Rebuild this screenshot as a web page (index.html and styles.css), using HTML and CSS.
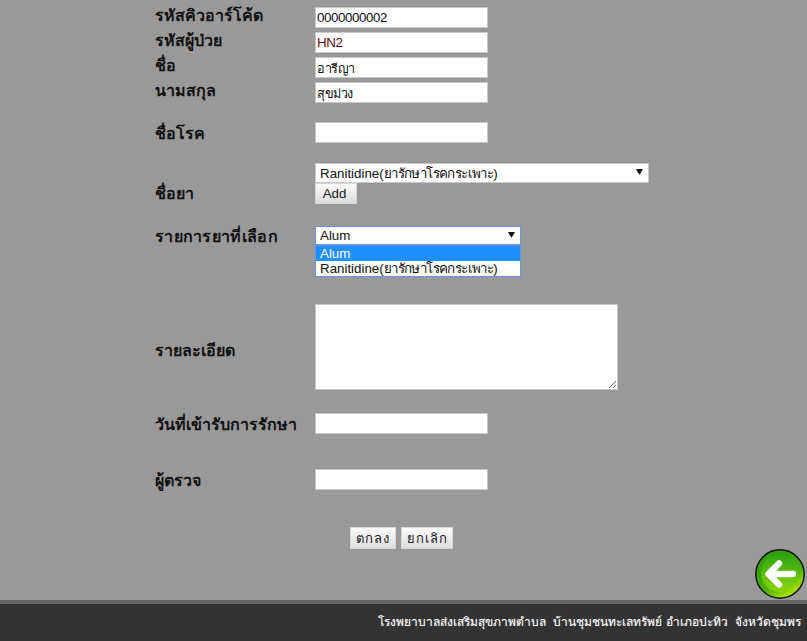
FILE: index.html
```html
<!DOCTYPE html>
<html lang="th">
<head>
<meta charset="utf-8">
<title>ข้อมูลการรักษา</title>
<link rel="stylesheet" href="styles.css">
</head>
<body>
<main class="page">
  <form class="form">
    <div class="row row-basic first"><label class="label">รหัสคิวอาร์โค้ด</label><input class="field" value="0000000002"></div>
    <div class="row row-basic"><label class="label">รหัสผู้ป่วย</label><input class="field field-red" value="HN2"></div>
    <div class="row row-basic"><label class="label">ชื่อ</label><input class="field field-thai" value="อารีญา"></div>
    <div class="row row-basic"><label class="label">นามสกุล</label><input class="field field-thai" value="สุขม่วง"></div>
    <div class="row row-disease"><label class="label">ชื่อโรค</label><input class="field"></div>
    <div class="row row-drug">
      <label class="label label-drug">ชื่อยา</label>
      <div class="stack">
        <div class="select select-wide"><span>Ranitidine(<span class="thai">ยารักษาโรคกระเพาะ</span>)</span><svg class="caret" viewBox="0 0 8 7"><path d="M0 0h8L4 7z"/></svg></div>
        <button type="button" class="btn btn-add">Add</button>
      </div>
    </div>
    <div class="row row-chosen">
      <label class="label label-wide">รายการยาที่เลือก</label>
      <div class="select select-open"><span>Alum</span><svg class="caret" viewBox="0 0 8 7"><path d="M0 0h8L4 7z"/></svg>
        <ul class="options">
          <li class="option option-on">Alum</li>
          <li class="option">Ranitidine(<span class="thai">ยารักษาโรคกระเพาะ</span>)</li>
        </ul>
      </div>
    </div>
    <div class="row row-detail"><label class="label label-detail">รายละเอียด</label><textarea class="area"></textarea></div>
    <div class="row row-date"><label class="label">วันที่เข้ารับการรักษา</label><input class="field"></div>
    <div class="row row-doctor"><label class="label">ผู้ตรวจ</label><input class="field"></div>
    <div class="actions">
      <button type="button" class="btn btn-thai btn-ok">ตกลง</button>
      <button type="button" class="btn btn-thai">ยกเลิก</button>
    </div>
  </form>
  <a class="back" href="#" aria-label="กลับ">
    <svg viewBox="0 0 50 50" width="50" height="50">
      <defs>
        <linearGradient id="rim" x1="0.2" y1="0" x2="0.8" y2="1"><stop offset="0" stop-color="#2c9a10"/><stop offset="0.6" stop-color="#45b00c"/><stop offset="1" stop-color="#c8f000"/></linearGradient>
        <linearGradient id="core" x1="0.5" y1="0" x2="0.5" y2="1"><stop offset="0" stop-color="#2aa312"/><stop offset="1" stop-color="#8fd60a"/></linearGradient>
      </defs>
      <circle cx="25" cy="25" r="24.2" fill="url(#rim)" stroke="#0b0f06" stroke-width="1.4"/>
      <circle cx="25" cy="24" r="19" fill="url(#core)"/>
      <path d="M38 25H15M24 14.5 13.5 25 24 35.5" fill="none" stroke="#fff" stroke-width="6.4" stroke-linecap="round" stroke-linejoin="round"/>
    </svg>
  </a>
</main>
<footer class="footer"><p class="footer-text">โรงพยาบาลส่งเสริมสุขภาพตำบล&nbsp; บ้านชุมชนทะเลทรัพย์ อำเภอปะทิว&nbsp; จังหวัดชุมพร</p></footer>
</body>
</html>
```
FILE: styles.css
```css
html, body { margin: 0; padding: 0; height: 100%; }
body {
  background: #999999;
  display: flex;
  flex-direction: column;
  height: 641px;
  overflow: hidden;
  font-family: "Liberation Sans", Arial, sans-serif;
  color: #111;
}
.page { flex: 1; position: relative; }
.form { padding: 7px 0 0 155px; }
.row { display: flex; align-items: center; }
.label {
  width: 160px;
  flex: none;
  box-sizing: border-box;
  padding-top: 2px;
  font-family: "Liberation Serif", "Noto Sans", serif;
  font-weight: bold;
  font-size: 16px;
  color: #111;
}
.label-wide { letter-spacing: 0.3px; white-space: nowrap; }
.row-basic { height: 21px; margin-bottom: 4px; }
.row-basic .label { padding-top: 0; padding-bottom: 4px; }
.row-disease { height: 21px; margin-top: 19px; }
.row-drug { margin-top: 20px; align-items: flex-start; }
.row-drug .label-drug { margin-top: 18px; padding-top: 0; }
.stack { display: flex; flex-direction: column; align-items: flex-start; }
.row-chosen { margin-top: 20px; height: 19px; }
.row-detail { margin-top: 59px; height: 86px; }
.row .label-detail { padding-top: 6px; }
.row-date { margin-top: 23px; height: 21px; }
.row-doctor { margin-top: 35px; height: 21px; }
.field, .area {
  box-sizing: border-box;
  border: 1px solid #c8c8c8;
  background: #fff;
  border-radius: 0;
  outline: none;
  margin: 0;
  font-family: "Liberation Sans", Arial, sans-serif;
  font-size: 13.33px;
  letter-spacing: -0.41px;
  color: #111;
  padding: 0 1px 1px 1px;
}
.field { width: 173px; height: 21px; }
.field-thai { font-size: 12.6px; padding: 2px 1px 0 1px; }
.field-red { color: #5e0b0b; }
.area { width: 303px; height: 86px; display: block; }
.select {
  box-sizing: border-box;
  position: relative;
  background: #fff;
  display: flex;
  align-items: center;
  padding-left: 4px;
  font-size: 13.33px;
  color: #111;
}
.thai { letter-spacing: -0.6px; }
.select-wide { width: 334px; height: 20px; border: 1px solid #c8c8c8; }
.select-open { width: 206px; height: 19px; border: 1px solid #6b93e0; }
.caret { position: absolute; top: 5px; width: 7px; height: 6px; fill: #111; }
.select-wide .caret { right: 5px; }
.select-open .caret { right: 5px; }
.options {
  position: absolute;
  left: -1px;
  top: 18px;
  width: 206px;
  box-sizing: border-box;
  margin: 0;
  padding: 0;
  list-style: none;
  background: #fff;
  border: 1px solid #6b93e0;
}
.option { height: 15px; line-height: 15px; padding-left: 4px; white-space: nowrap; }
.option-on { background: #1e90ff; color: #fff; }
.btn {
  box-sizing: border-box;
  border: 1px solid #d8d8d8;
  border-radius: 0;
  background: linear-gradient(#fbfbfb, #dedede);
  margin: 0;
  padding: 0;
  color: #222;
  font-family: "Liberation Sans", Arial, sans-serif;
}
.btn-add { width: 42px; height: 21px; font-size: 13.33px; padding-right: 3px; }
.actions { display: flex; gap: 5px; margin: 37px 0 0 195px; }
.btn-thai { height: 22px; width: 52px; font-size: 13px; letter-spacing: 1px; }
.btn-ok { width: 46px; }
.back { position: absolute; right: 2px; top: 549px; width: 50px; height: 50px; display: block; }
.back svg { display: block; }
.footer {
  flex: none;
  height: 37px;
  border-top: 4px solid #666666;
  background: #333333;
  display: flex;
  justify-content: flex-end;
  align-items: center;
  padding-right: 6px;
  box-sizing: content-box;
}
.footer-text {
  margin: 0 0 3px 0;
  color: #fff;
  font-size: 12px;
  word-spacing: 0.3px;
  font-family: "Liberation Sans", Arial, sans-serif;
  white-space: nowrap;
  text-shadow: 0 0 1px rgba(255, 255, 255, 0.35);
}
```
